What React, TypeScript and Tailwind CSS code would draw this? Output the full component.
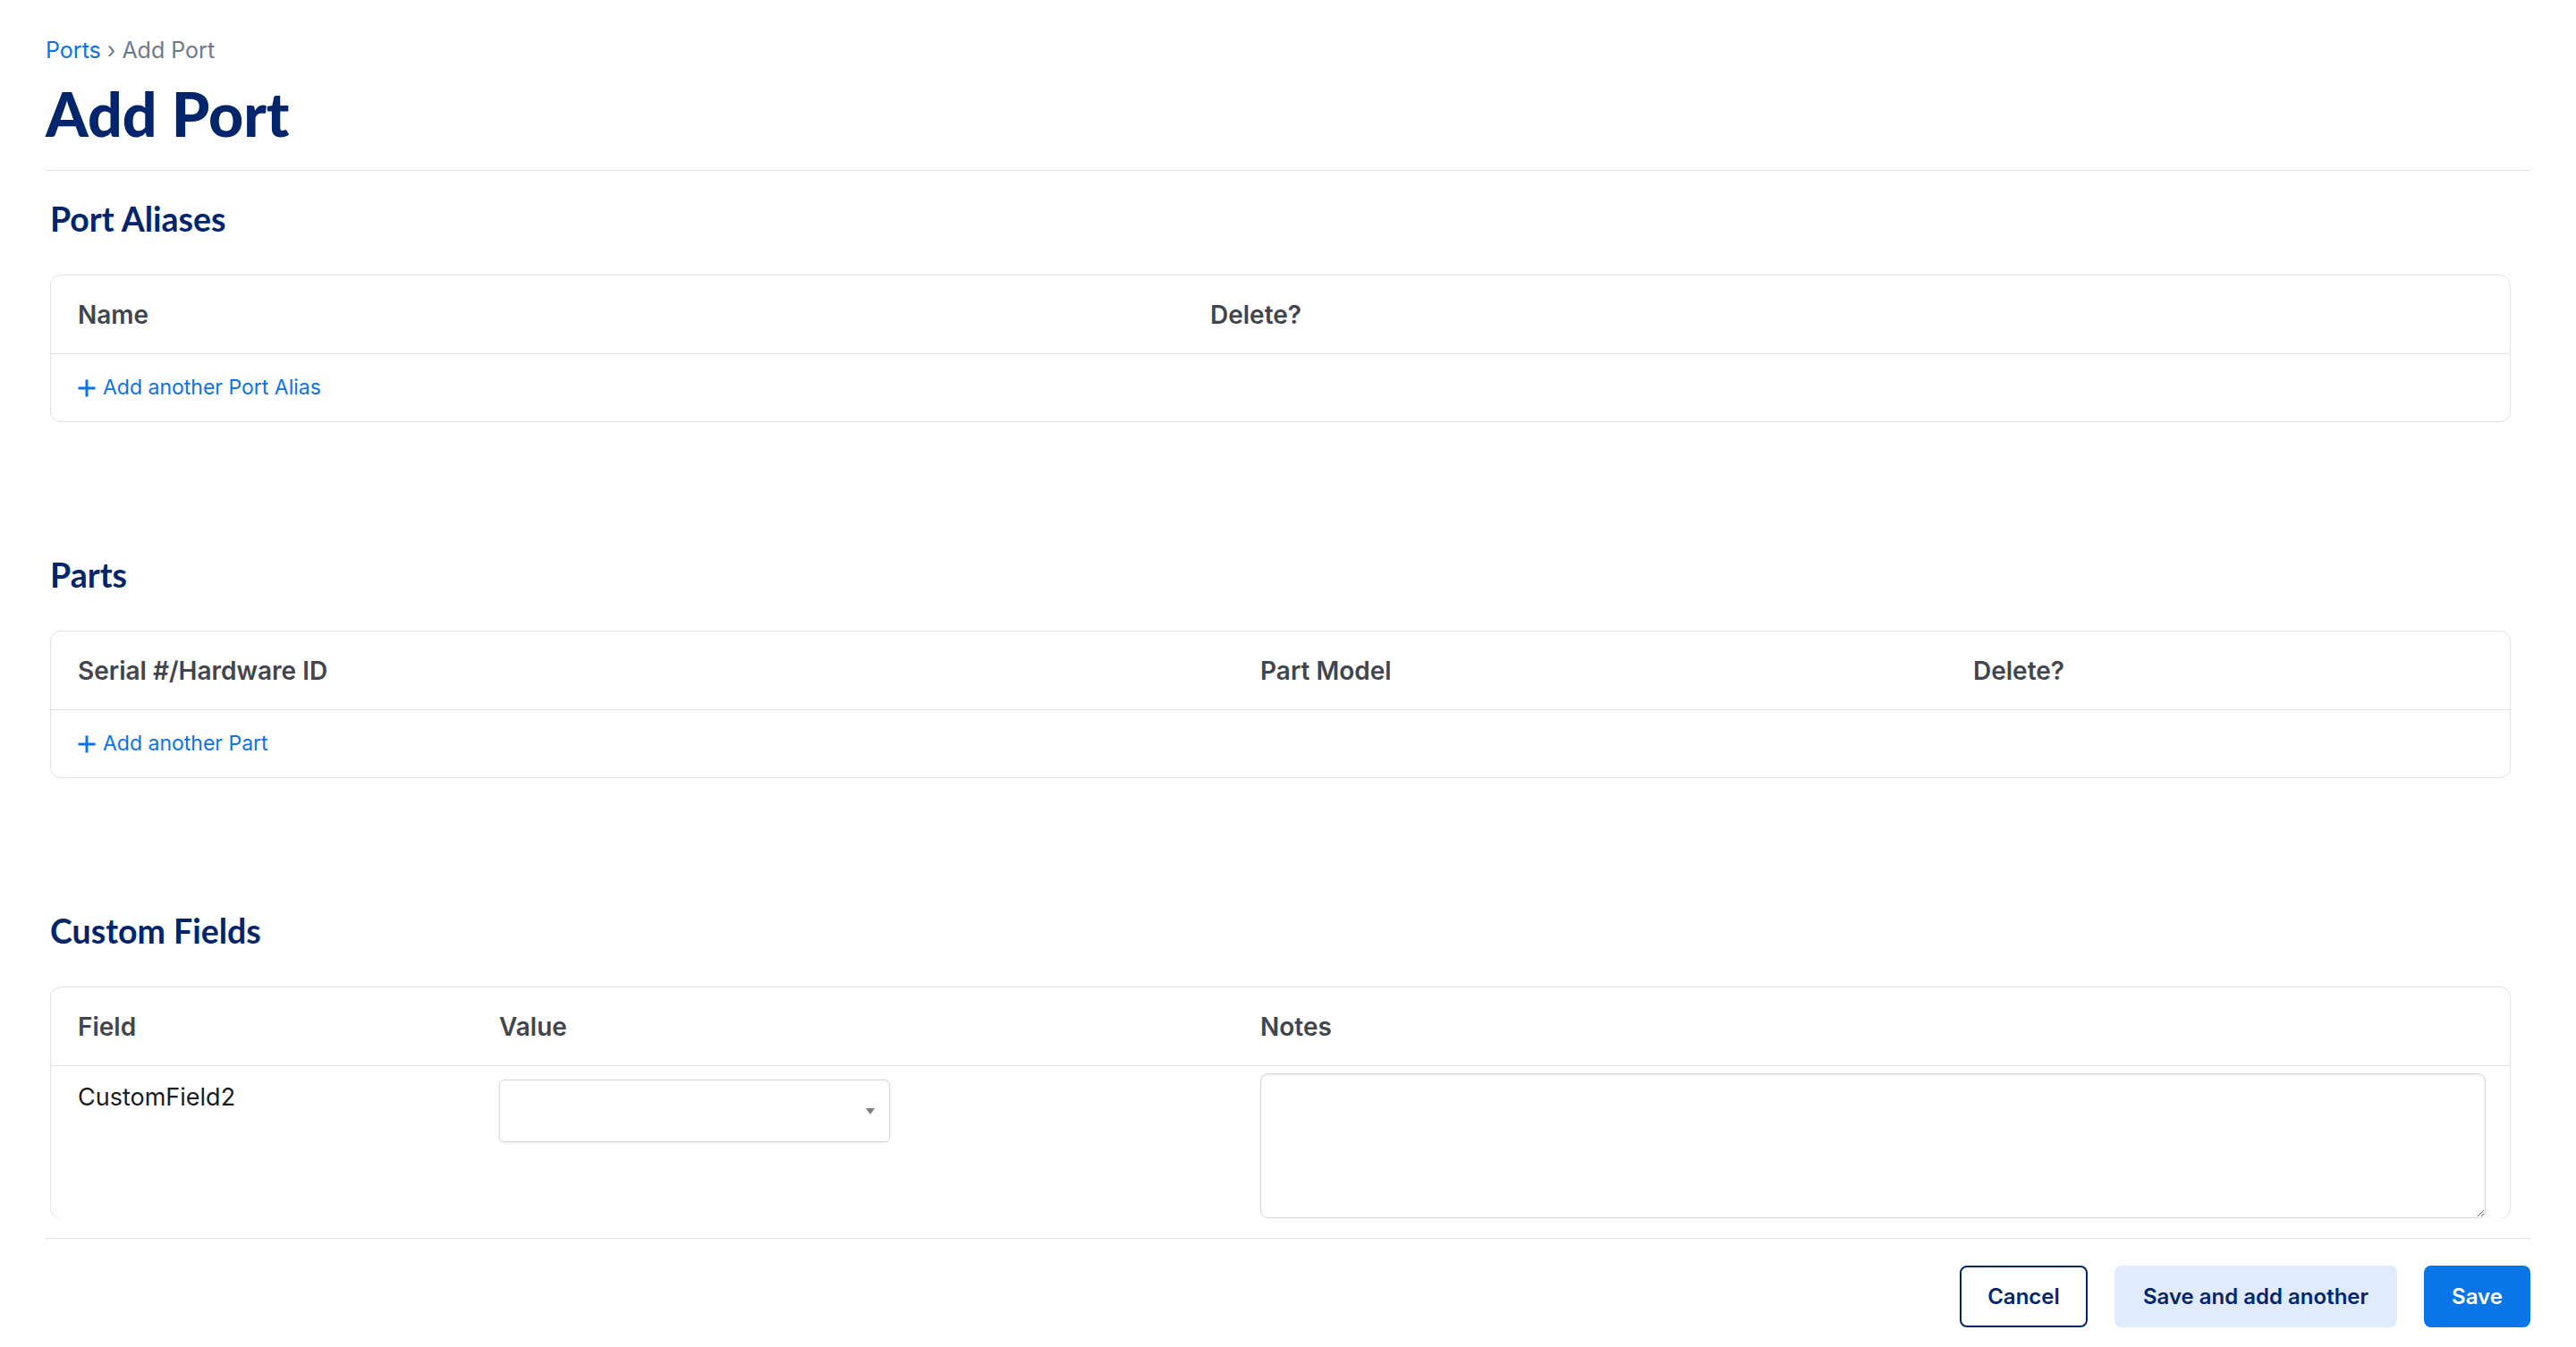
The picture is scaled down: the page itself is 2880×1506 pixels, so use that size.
import { ReactNode } from 'react'

const body = { fontFamily: 'Inter, "Noto Sans", sans-serif' }
const head = { fontFamily: 'Lato, "Open Sans", sans-serif' }

function PlusIcon() {
  return (
    <svg width="20" height="20" viewBox="0 0 20 20" className="shrink-0">
      <path d="M10 2v16M2 10h16" stroke="#0b72e7" strokeWidth="3" strokeLinecap="square" />
    </svg>
  )
}

function SectionTitle({ children, className }: { children: ReactNode; className?: string }) {
  return (
    <h2 style={head} className={'text-[37.5px] leading-[44px] font-bold text-[#03256c] ' + (className ?? '')}>
      {children}
    </h2>
  )
}

function HeadCell({ children }: { children?: ReactNode }) {
  return (
    <div className="flex h-[87px] items-center px-[30px] text-[28px] font-semibold text-[#41454d]">
      {children}
    </div>
  )
}

function AddRow({ label }: { label: string }) {
  return (
    <div className="flex h-[75px] items-center gap-[8px] px-[30px] text-[23px] text-[#0b72e7]">
      <PlusIcon />
      <span>{label}</span>
    </div>
  )
}

export default function App() {
  return (
    <div style={body} className="flex h-screen flex-col bg-white">
      <div className="min-h-0 flex-1 overflow-hidden px-[51px] pt-[40px]">
        <div className="text-[25px] leading-[32px]">
          <span className="text-[#0b72e7]">Ports</span>
          <span className="mx-[7px] text-[#6d7a87]">›</span>
          <span className="text-[#6d7a87]">Add Port</span>
        </div>
        <h1 style={head} className="mt-[15px] text-[68px] leading-[80px] font-black text-[#03256c]">
          Add Port
        </h1>
        <div className="mt-[23px] border-t border-[#dfe1e5]" />

        <div className="pl-[5px] pr-[22px]">
          <SectionTitle className="mt-[32px]">Port Aliases</SectionTitle>
          <div className="mt-[40px] rounded-[12px] border border-[#dfe1e5]">
            <div className="grid grid-cols-[1266px_1fr] border-b border-[#dfe1e5]">
              <HeadCell>Name</HeadCell>
              <HeadCell>Delete?</HeadCell>
            </div>
            <AddRow label="Add another Port Alias" />
          </div>

          <SectionTitle className="mt-[149px]">Parts</SectionTitle>
          <div className="mt-[40px] rounded-[12px] border border-[#dfe1e5]">
            <div className="grid grid-cols-[1322px_797px_1fr] border-b border-[#dfe1e5]">
              <HeadCell>Serial #/Hardware ID</HeadCell>
              <HeadCell>Part Model</HeadCell>
              <HeadCell>Delete?</HeadCell>
            </div>
            <AddRow label="Add another Part" />
          </div>

          <SectionTitle className="mt-[149px]">Custom Fields</SectionTitle>
          <div className="mt-[40px] rounded-[12px] border border-[#dfe1e5]">
            <div className="grid grid-cols-[471px_851px_1fr] border-b border-[#dfe1e5]">
              <HeadCell>Field</HeadCell>
              <HeadCell>Value</HeadCell>
              <HeadCell>Notes</HeadCell>
            </div>
            <div className="grid grid-cols-[471px_851px_1fr]">
              <div className="px-[30px] pt-[19px] text-[27px] leading-[32px] text-[#1b1c1f]">CustomField2</div>
              <div className="px-[30px] pt-[15px]">
                <div className="flex h-[70px] w-[437px] items-center justify-end rounded-[6px] border border-[#d3d6da] pr-[16px] shadow-[0_1px_3px_rgba(0,0,0,0.08)]">
                  <svg width="10" height="7" viewBox="0 0 10 7">
                    <path d="M0 0h10L5 7z" fill="#7a7f86" />
                  </svg>
                </div>
              </div>
              <div className="pl-[30px] pr-[27px] pt-[8px]">
                <textarea className="block h-[162px] w-full rounded-[8px] border border-[#d3d6da] shadow-[inset_0_2px_2px_rgba(0,0,0,0.06)] outline-none" />
              </div>
            </div>
          </div>
        </div>
      </div>

      <div className="shrink-0 px-[51px] pt-[22px]">
        <div className="flex justify-end gap-[30px] border-t border-[#dfe1e5] pt-[30px] pb-[22px]">
          <button className="h-[69px] w-[143px] rounded-[8px] border-2 border-[#03256c] text-[24px] font-semibold text-[#03256c]">
            Cancel
          </button>
          <button className="h-[69px] w-[316px] rounded-[8px] bg-[#e0ebfd] text-[24px] font-semibold text-[#03256c]">
            Save and add another
          </button>
          <button className="h-[69px] w-[119px] rounded-[8px] bg-[#0a75e6] text-[24px] font-semibold text-white">
            Save
          </button>
        </div>
      </div>
    </div>
  )
}
